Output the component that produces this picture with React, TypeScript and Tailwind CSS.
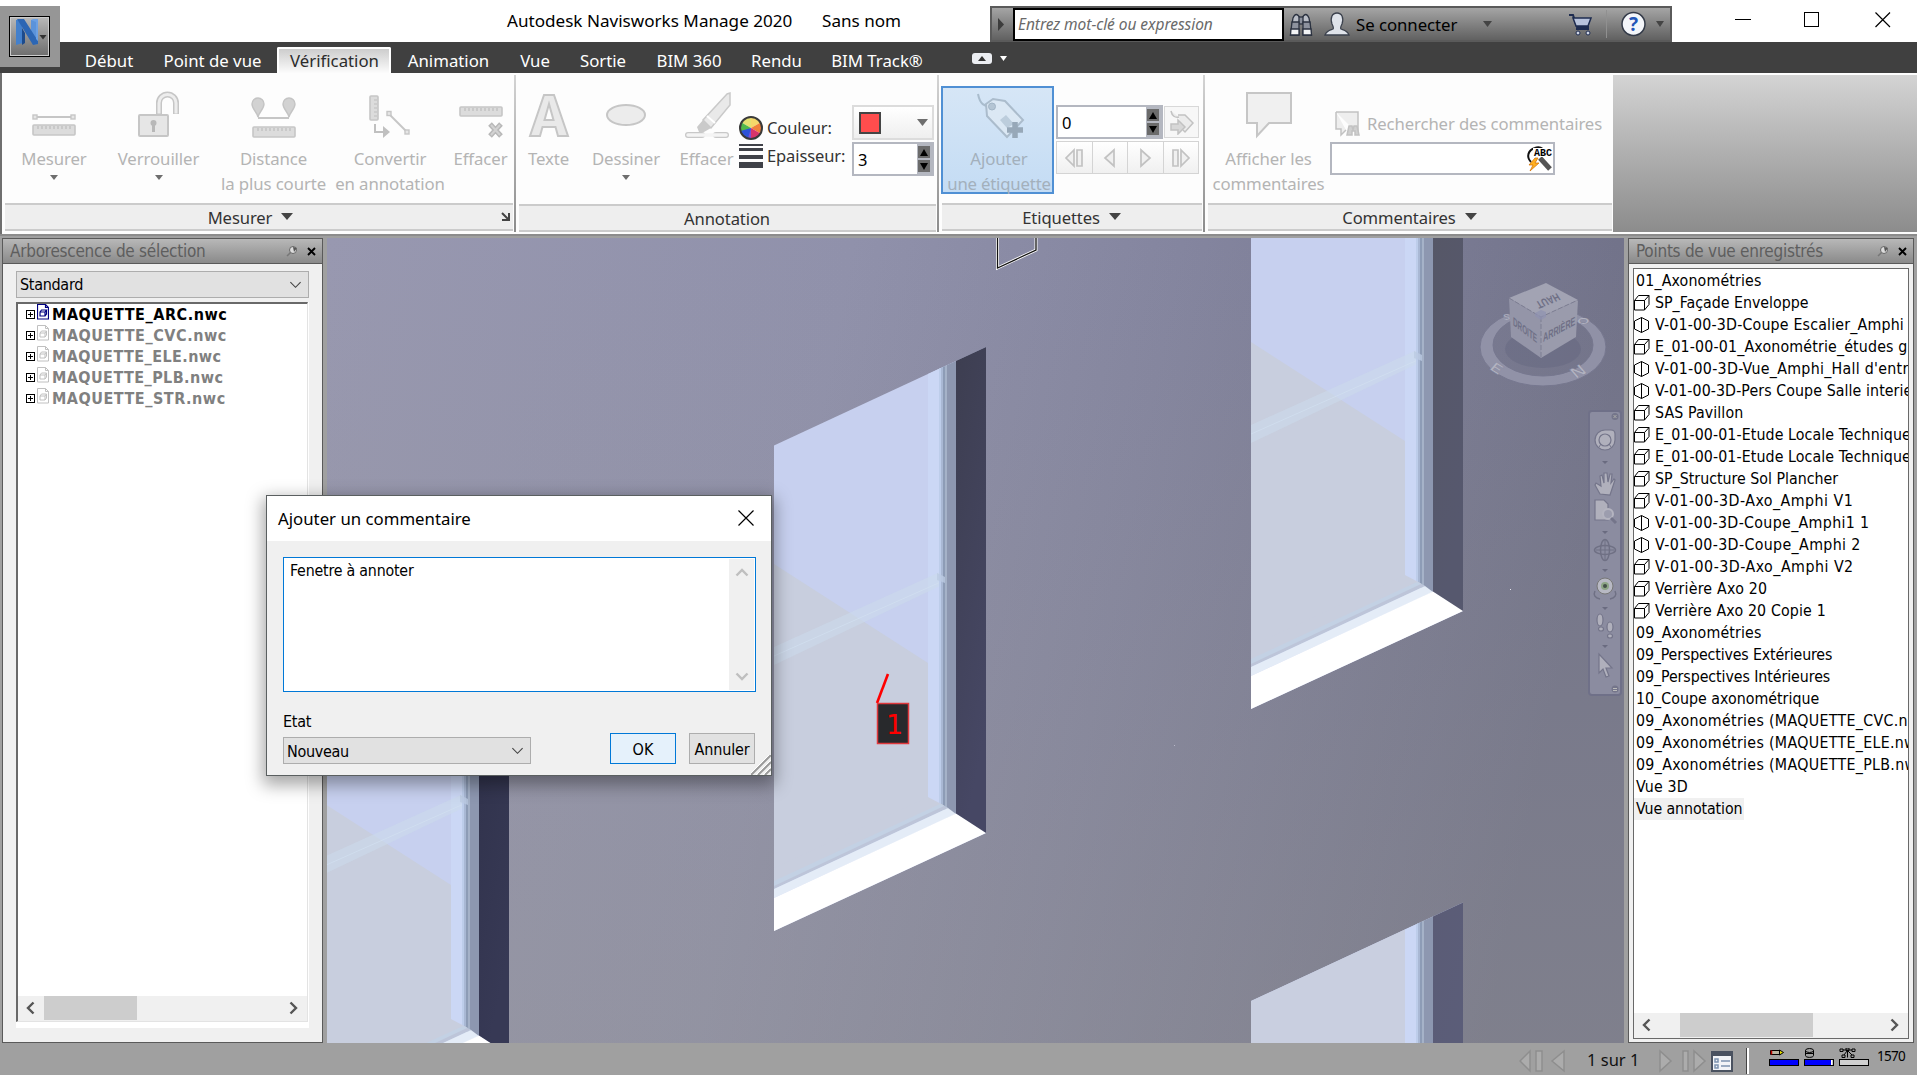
import React from "react";

const SEGOE = "font-['Noto_Sans','Segoe_UI',sans-serif]";
const TAHOMA = "font-['DejaVu_Sans_Condensed','Tahoma','DejaVu_Sans',sans-serif] [font-stretch:condensed]";

/* ---------- small shared pieces ---------- */

function Caret({ className = "", w = 9, h = 5, color = "#6e6e6e" }: { className?: string; w?: number; h?: number; color?: string }) {
  return (
    <svg width={w} height={h} viewBox="0 0 10 6" preserveAspectRatio="none" className={className}>
      <path d="M0 0h10L5 6z" fill={color} />
    </svg>
  );
}

function Chevron({ dir, color = "#555", size = 14, sw = 2.4 }: { dir: "left" | "right" | "up" | "down"; color?: string; size?: number; sw?: number }) {
  const d = { left: "M9.5 1.5L4 7l5.5 5.5", right: "M4.5 1.5L10 7l-5.5 5.5", up: "M1.5 9.5L7 4l5.5 5.5", down: "M1.5 4.5L7 10l5.5-5.5" }[dir];
  return (
    <svg width={size} height={size} viewBox="0 0 14 14" className="shrink-0">
      <path d={d} fill="none" stroke={color} strokeWidth={sw} />
    </svg>
  );
}

/* ---------- ribbon icons ---------- */

const G = { fill: "#e6e6e6", stroke: "#c6c6c6", strokeWidth: 2 };

function Ruler({ x, y, w = 43, h = 11 }: { x: number; y: number; w?: number; h?: number }) {
  const n = Math.floor((w - 6) / 4);
  return (
    <g>
      <rect x={x} y={y} width={w} height={h} rx="1" fill="#dcdcdc" stroke="#c6c6c6" strokeWidth="1.6" />
      {Array.from({ length: n }, (_, i) => (
        <path key={i} d={`M${x + 5 + i * 4} ${y + 1}v3`} stroke="#bdbdbd" strokeWidth="1.2" />
      ))}
    </g>
  );
}

const IconMesurer = () => (
  <svg width="50" height="50">
    <path d="M6 27h38" stroke="#c6c6c6" strokeWidth="2" />
    <rect x="4" y="25" width="4" height="4" {...G} strokeWidth="1.4" />
    <rect x="42" y="25" width="4" height="4" {...G} strokeWidth="1.4" />
    <Ruler x={4} y={35} w={42} h={10} />
  </svg>
);
const IconLock = () => (
  <svg width="50" height="50">
    <path d="M25 24V13a8.500 8.500 0 0 1 17 0v11" fill="none" stroke="#c6c6c6" strokeWidth="6" />
    <path d="M25 23.500V13a8.500 8.500 0 0 1 17 0v10.500" fill="none" stroke="#ededed" strokeWidth="3" />
    <rect x="5" y="25" width="29" height="21" rx="1" {...G} />
    <circle cx="19.500" cy="33" r="3" fill="#b8b8b8" />
    <path d="M19.500 33v9" stroke="#b8b8b8" strokeWidth="3" />
  </svg>
);
const Pin = ({ x }: { x: number }) => (
  <path d={`M${x} 27c-1-5-6-8-6-13a6 6 0 0 1 12 0c0 5-5 8-6 13z`} fill="#d2d2d2" stroke="#c4c4c4" strokeWidth="1.4" />
);
const IconDistance = () => (
  <svg width="50" height="50">
    <path d="M9 28h31" stroke="#c6c6c6" strokeWidth="2" />
    <Pin x={9} />
    <Pin x={40} />
    <Ruler x={4} y={37} w={42} h={10} />
  </svg>
);
const IconConvert = () => (
  <svg width="50" height="50">
    <rect x="5" y="6" width="8" height="24" rx="1" fill="#dcdcdc" stroke="#c6c6c6" strokeWidth="1.6" />
    <path d="M9 10h3M9 14h3M9 18h3M9 22h3M9 26h3" stroke="#bdbdbd" strokeWidth="1.200" />
    <path d="M10 34v8h9" fill="none" stroke="#c0c0c0" strokeWidth="2" />
    <path d="M18 36l7 6-7 6z" fill="#c0c0c0" />
    <path d="M24 24l18 18" stroke="#c6c6c6" strokeWidth="2" />
    <rect x="22" y="21.500" width="4" height="4" {...G} strokeWidth="1.4" />
    <rect x="40" y="40" width="4" height="4" {...G} strokeWidth="1.4" />
  </svg>
);
const IconErase = () => (
  <svg width="50" height="50">
    <Ruler x={4} y={17} w={42} h={9} />
    <path d="M34 34l11 12M45 34L34 46" stroke="#b8b8b8" strokeWidth="5" />
    <path d="M35 35l9 10M44 35l-9 10" stroke="#d2d2d2" strokeWidth="2" />
  </svg>
);
const IconText = () => (
  <svg width="50" height="50">
    <path d="M20 5h10l14 41H34l-2.500-9h-13L16 46H6zM25 14l-4.500 16h9z" fill="#e9e9e9" fillRule="evenodd" stroke="#c6c6c6" strokeWidth="2" />
  </svg>
);
const IconEllipse = () => (
  <svg width="50" height="50">
    <ellipse cx="25" cy="25" rx="19" ry="10" fill="#ececec" stroke="#c6c6c6" strokeWidth="2" />
  </svg>
);
const IconEraser = () => (
  <svg width="50" height="50">
    <path d="M6 45h14M34 45h10" stroke="#c8c8c8" strokeWidth="6" strokeLinecap="round" />
    <path d="M6 45h38" stroke="#f4f4f4" strokeWidth="3.500" strokeLinecap="round" />
    <path d="M45 4L21 30l8 8L48 15V3z" fill="#e9e9e9" stroke="#c9c9c9" strokeWidth="1.500" />
    <path d="M21 30l-6 7 2 5h5l7-4z" fill="#cacaca" />
    <path d="M25 26l8 7" stroke="#fff" strokeWidth="2" />
  </svg>
);
const IconTag = () => (
  <svg width="54" height="50">
    <path d="M6 3c2 10 6 13 14 12" fill="none" stroke="#a9bccd" strokeWidth="2" />
    <path d="M14 13l7-5 12 2 18 19-16 17L15 25z" fill="#dbe8f4" stroke="#abbccc" strokeWidth="2" />
    <circle cx="20" cy="15.500" r="3.500" fill="#b4c5d4" stroke="#a2b5c6" />
    <path d="M34 24l8 9-7 4-7-8z" fill="#bccddc" />
    <path d="M43 31v16M35 39h16" stroke="#97a8b8" strokeWidth="5.500" />
  </svg>
);
const IconBubble = () => (
  <svg width="50" height="50">
    <path d="M3 3h44v30H25L13 46V33H3z" fill="#f0f0f0" stroke="#c6c6c6" strokeWidth="2" />
  </svg>
);

/* ---------- ribbon building blocks ---------- */

function BigButton({ icon, lines, width, arrow }: { icon: React.ReactNode; lines: string[]; width: string; arrow?: boolean }) {
  return (
    <div className={`${width} flex shrink-0 flex-col items-center pt-[15px] text-[#b4b4b4]`}>
      <div className="h-[56px]">{icon}</div>
      {lines.map((l) => (
        <div key={l} className="text-[16.800px] leading-[25px] tracking-[-0.1px] whitespace-nowrap">
          {l}
        </div>
      ))}
      {arrow && <Caret className="mt-[4px]" w={8} h={5} />}
    </div>
  );
}

function Group({
  width,
  title,
  arrow,
  launcher,
  low,
  children,
}: {
  width: string;
  title: string;
  arrow?: boolean;
  launcher?: boolean;
  low?: boolean;
  children: React.ReactNode;
}) {
  return (
    <div className={`${width} flex shrink-0 flex-col`}>
      <div className={`${low ? "h-[129px]" : "h-[128px]"} flex`}>{children}</div>
      <div
        className={`${launcher ? "pr-[17px]" : "pr-[1px]"} relative mr-[1px] ml-[3px] flex h-[28px] items-center justify-center border-y-2 border-[#cbcbcb] bg-[#eeeeee] pt-[3px] text-[16.600px] text-[#333]`}
      >
        <span className="leading-none tracking-[-0.1px] whitespace-nowrap">{title}</span>
        {arrow && <Caret className="mb-[4px] ml-[9px]" w={12} h={7} color="#444" />}
        {launcher && (
          <svg width="9" height="9" className="absolute right-[3px] bottom-[8px]">
            <path d="M1 1l6 6M8 1v7H1" fill="none" stroke="#444" strokeWidth="2" />
          </svg>
        )}
      </div>
    </div>
  );
}

const Sep = () => <div className="h-[157px] w-[2px] shrink-0 bg-gradient-to-b from-[#d4d4d4] to-[#8c8c8c]" />;

function Spinner({ value, width }: { value: string; width: string }) {
  return (
    <div className={`${width} flex h-[34px] border-2 border-[#b4b7c0] bg-white`}>
      <div className="flex-1 pl-[4px] text-[16.500px] leading-[31px] text-black">{value}</div>
      <div className="flex w-[15px] flex-col justify-between bg-[#b4b7c0] py-[2px] pl-[1px]">
        <div className="flex h-[12px] w-[12px] items-center justify-center bg-[#6b6b6b]">
          <svg width="8" height="7">
            <path d="M0 7h8L4 0z" />
          </svg>
        </div>
        <div className="flex h-[12px] w-[12px] items-center justify-center bg-[#6b6b6b]">
          <svg width="8" height="7">
            <path d="M0 0h8L4 7z" />
          </svg>
        </div>
      </div>
    </div>
  );
}

function NavGlyph({ kind }: { kind: number }) {
  return (
    <svg width="20" height="20" fill="#f0f0f0" stroke="#c2c2c2" strokeWidth="1.700">
      {kind === 0 && <path d="M10 2v16L2 10zM13 2h5v16h-5z" />}
      {kind === 1 && <path d="M14 2v16L5 10z" />}
      {kind === 2 && <path d="M6 2v16l9-8z" />}
      {kind === 3 && <path d="M10 2v16l8-8zM2 2h5v16H2z" />}
    </svg>
  );
}

/* ---------- title bar ---------- */

const tabs: [string, string][] = [
  ["Début", "w-[78px]"],
  ["Point de vue", "w-[129px]"],
  ["Vérification", "w-[114px]"],
  ["Animation", "w-[115px]"],
  ["Vue", "w-[58px]"],
  ["Sortie", "w-[78px]"],
  ["BIM 360", "w-[94px]"],
  ["Rendu", "w-[81px]"],
  ["BIM Track®", "w-[120px]"],
];

function TitleBar() {
  return (
    <div className="flex h-[42px] bg-white">
      <div className="w-[507px] shrink-0" />
      <div className="w-[315px] shrink-0 pt-[8px] text-[17.100px] leading-[26px] whitespace-nowrap text-black">Autodesk Navisworks Manage 2020</div>
      <div className="w-[168px] shrink-0 pt-[8px] text-[17.100px] leading-[26px] whitespace-nowrap text-black">Sans nom</div>
      <div className="mt-[6px] flex h-[36px] w-[682px] shrink-0 items-center border-2 border-[#5a5a5a] bg-gradient-to-b from-[#a5a5a5] to-[#616161]">
        <svg width="21" height="30" className="shrink-0">
          <path d="M6 9l6 6.500L6 22z" fill="#3c3c3c" />
        </svg>
        <div className="h-[33px] w-[271px] shrink-0 border-2 border-black bg-white pl-[3px] text-[15.500px] leading-[29px] tracking-[-0.050px] whitespace-nowrap text-[#6a6a6a] italic">
          Entrez mot-clé ou expression
        </div>
        <svg width="24" height="26" className="ml-[5px] shrink-0" stroke="#2b3240" strokeWidth="1.300">
          <path d="M4 7q3-7 7 0l-1 5-7 1zM20 7q-3-7-7 0l1 5 7 1z" fill="#b9bdc6" />
          <rect x="10" y="6" width="4" height="7" fill="#8b909c" />
          <path d="M3 11h7v13H1.500zM14 11h7l1.500 13H14z" fill="#8d929e" />
          <path d="M2 18h8v6H1.500zM14 18h8l.5 6H14z" fill="#f2f3f5" />
        </svg>
        <svg width="26" height="26" className="ml-[11px] shrink-0" stroke="#3b414d" strokeWidth="1.300">
          <path d="M1 24c2-5 6-5 8-6 1-1 0-3-1-5-2-6 0-11 5-11s7 5 5 11c-1 2-2 4-1 5 2 1 6 1 8 6z" fill="#dfe3ea" />
        </svg>
        <span className="ml-[6px] w-[127px] pt-[3px] text-[16.800px] leading-none tracking-[-0.050px] whitespace-nowrap text-black">Se connecter</span>
        <Caret w={9} h={6} color="#444" />
        <svg width="26" height="26" className="ml-[75px] shrink-0">
          <path d="M2 4h4l4 12h12" fill="none" stroke="#1e2c50" strokeWidth="2" />
          <path d="M6 7h18l-3 8H9z" fill="#b8c3dc" stroke="#1e2c50" strokeWidth="1.500" />
          <path d="M9 18h13" stroke="#1e2c50" strokeWidth="2" />
          <circle cx="11" cy="22" r="2" fill="#d0d6e5" stroke="#1e2c50" />
          <circle cx="21" cy="22" r="2" fill="#d0d6e5" stroke="#1e2c50" />
        </svg>
        <div className="mr-[14px] ml-[13px] h-[28px] w-px bg-[#909090]" />
        <svg width="26" height="26" className="shrink-0">
          <circle cx="12.500" cy="13" r="11.500" fill="#f4f6fa" stroke="#333a48" strokeWidth="1.500" />
          <text x="12.500" y="20" textAnchor="middle" fontSize="19" fontWeight="bold" fill="#2456b8" fontFamily="Noto Sans, sans-serif">
            ?
          </text>
        </svg>
        <Caret className="ml-[9px]" w={8} h={6} color="#444" />
      </div>
      <svg width="245" height="42" className="shrink-0" fill="none" stroke="#000" strokeWidth="1.200" shapeRendering="crispEdges">
        <path d="M63 19.500h16" />
        <rect x="132.500" y="12.500" width="14" height="14" />
        <path d="M203.500 12.500l14.500 14.500M218 12.500L203.500 27" shapeRendering="auto" />
      </svg>
    </div>
  );
}

function TabBar() {
  return (
    <div className="flex h-[31px] items-end bg-[#404040] pl-[70px]">
      {tabs.map(([t, w], i) => (
        <div
          key={t}
          className={`${w} h-[26px] shrink-0 text-center text-[16.800px] whitespace-nowrap ${
            i === 2 ? "rounded-t-[2px] border-x-2 border-t-2 border-white bg-gradient-to-b from-[#cdcdcd] to-[#fcfcfc] pl-px leading-[23px] text-[#2c2c2c]" : "leading-[27px] text-white"
          }`}
        >
          {t}
        </div>
      ))}
      <div className="mb-[9px] ml-[35px] flex h-[11px] w-[20px] items-center justify-center rounded-[3px] bg-[#eceef2]">
        <svg width="8" height="5">
          <path d="M0 5h8L4 0z" fill="#333" />
        </svg>
      </div>
      <Caret className="mb-[12px] ml-[8px]" w={7} h={5} color="#fff" />
    </div>
  );
}

function AppButton() {
  return (
    <div className="absolute top-[6px] left-0 flex h-[61px] w-[60px] bg-[#969696] pt-[10px] pl-[9px]">
      <div className="flex h-[41px] w-[41px] items-start border border-black bg-gradient-to-b from-[#b9b9b9] to-[#6e6e6e] pt-[2px] pl-[4px] outline-1 -outline-offset-2 outline-[#ccc]">
        <svg width="34" height="30">
          <path d="M2 1l6-1 1 24-7 2z" fill="#4380cc" />
          <path d="M8 9l3 5v10l-3 2z" fill="#1d4b8c" />
          <path d="M17 1h7v22l-2 3-5-8z" fill="#5b93da" />
          <path d="M3 0h7l14 22v3l-5 1L8 8z" fill="#2c66b4" />
          <path d="M17 1l2-1h5v22l-2-2V3z" fill="#6ba0e4" />
          <path d="M25.500 16h7L29 20.500z" fill="#333" />
        </svg>
      </div>
    </div>
  );
}

/* ---------- ribbon ---------- */

function Ribbon() {
  return (
    <div className="h-[165px] bg-[#a0a0a0]">
      <div className="flex h-[161px] border-b-0 border-l-2 border-l-[#6f6f6f] bg-[#fdfdfd] pt-[2px]">
        <Group width="w-[512px]" title="Mesurer" arrow launcher>
          <BigButton icon={<IconMesurer />} lines={["Mesurer"]} width="w-[104px]" arrow />
          <BigButton icon={<IconLock />} lines={["Verrouiller"]} width="w-[105px]" arrow />
          <BigButton icon={<IconDistance />} lines={["Distance", "la plus courte"]} width="w-[125px]" />
          <BigButton icon={<IconConvert />} lines={["Convertir", "en annotation"]} width="w-[108px]" />
          <BigButton icon={<IconErase />} lines={["Effacer"]} width="w-[73px]" />
        </Group>
        <Sep />
        <Group width="w-[421px]" title="Annotation" low>
          <BigButton icon={<IconText />} lines={["Texte"]} width="w-[65px]" />
          <BigButton icon={<IconEllipse />} lines={["Dessiner"]} width="w-[90px]" arrow />
          <BigButton icon={<IconEraser />} lines={["Effacer"]} width="w-[71px]" />
          <div className="-ml-px flex w-[111px] shrink-0 flex-col pt-[39px]">
            <div className="flex h-[28px] items-center">
              <svg width="26" height="26" viewBox="-13 -13 26 26" className="-ml-[3px] shrink-0">
                <path d="M0 0L0-11A11 11 0 0 1 9.500-5.500z" fill="#f5d76a" />
                <path d="M0 0L-9.500-5.500A11 11 0 0 1 0-11z" fill="#e6e070" />
                <path d="M0 0L9.500-5.500A11 11 0 0 1 9.500 5.500z" fill="#f0803a" />
                <path d="M0 0L9.500 5.500A11 11 0 0 1 0 11z" fill="#d8356a" />
                <path d="M0 0L0 11A11 11 0 0 1-9.500 5.500z" fill="#7a50d8" />
                <path d="M0 0L-9.500 5.500A11 11 0 0 1-9.500-5.500z" fill="#52b84a" />
                <path d="M0 0L-10.500 3A11 11 0 0 0-3 10.500z" fill="#2d52d8" />
                <circle r="11" fill="none" stroke="#3a3a3a" strokeWidth="2" />
              </svg>
              <span className="ml-[3px] text-[16.500px] tracking-[-0.1px] text-[#333]">Couleur:</span>
            </div>
            <div className="flex h-[28px] items-center">
              <svg width="24" height="24" className="-ml-[2px] shrink-0" fill="#3f4148">
                <path d="M0 0h24v2H0zM0 4h24v3H0zM0 11h24v4H0zM0 18h24v6H0z" />
              </svg>
              <span className="ml-[4px] text-[16.500px] tracking-[-0.1px] text-[#333]">Epaisseur:</span>
            </div>
          </div>
          <div className="flex shrink-0 flex-col gap-[2px] pt-[30px]">
            <div className="flex h-[35px] w-[82px] items-center justify-between border-2 border-[#dcdcdc] bg-gradient-to-b from-white to-[#efefef] pr-[4px] pl-[5px]">
              <div className="h-[22px] w-[22px] border-2 border-[#444] bg-[#ff4d4d]" />
              <Caret w={11} h={7} />
            </div>
            <Spinner value="3" width="w-[82px]" />
          </div>
        </Group>
        <Sep />
        <Group width="w-[264px]" title="Etiquettes" arrow>
          <div className="mt-[11px] ml-[2px] flex h-[108px] w-[113px] shrink-0 flex-col items-center border-2 border-[#5090d4] bg-gradient-to-b from-[#d6e6f6] to-[#c4dcf4] pt-[3px] pl-[3px] text-[#a3b0bc]">
            <div className="h-[55px] shrink-0">
              <IconTag />
            </div>
            <div className="h-[25px] shrink-0 text-[16.800px] leading-[25px] tracking-[-0.1px]">Ajouter</div>
            <div className="h-[21px] shrink-0 text-[16.800px] leading-[25px] tracking-[-0.2px] whitespace-nowrap">une étiquette</div>
          </div>
          <div className="ml-[2px] pt-[30px]">
            <div className="flex gap-px">
              <Spinner value="0" width="w-[107px]" />
              <div className="mt-px flex h-[32px] w-[35px] items-center justify-center border border-[#d8d8d8] bg-[#f7f7f7]">
                <svg width="26" height="26" fill="#ececec" stroke="#c2c2c2" strokeWidth="1.500">
                  <path d="M2 2c1 5 4 7 8 6M9 6h7l8 8-8 9-2-2" />
                  <path d="M2 15h7v-4l7 7-7 7v-4H2z" fill="#d8d8d8" />
                </svg>
              </div>
            </div>
            <div className="mt-[2px] flex h-[33px] w-[143px] border border-[#d4d4d4] bg-gradient-to-b from-white to-[#f0f0f0]">
              {[0, 1, 2, 3].map((k) => (
                <div key={k} className="flex flex-1 items-center justify-center border-r border-[#d4d4d4] last:border-r-0">
                  <NavGlyph kind={k} />
                </div>
              ))}
            </div>
          </div>
        </Group>
        <Sep />
        <Group width="w-[408px]" title="Commentaires" arrow>
          <BigButton icon={<IconBubble />} lines={["Afficher les", "commentaires"]} width="w-[127px]" />
          <div className="-ml-[2px] pt-[33px]">
            <div className="flex h-[32px] items-center">
              <svg width="26" height="26" className="ml-[5px] shrink-0" fill="#eee" stroke="#c2c2c2" strokeWidth="1.500">
                <path d="M1 1h22v22M1 1v17h5v6l5-5" />
                <path d="M12 24l2-9h3l1 4 1-4h3l2 9h-4v-4h-3v4z" fill="#d0d0d0" />
              </svg>
              <span className="ml-[6px] text-[16.700px] tracking-[-0.1px] whitespace-nowrap text-[#b4b4b4]">Rechercher des commentaires</span>
            </div>
            <div className="mt-[2px] flex h-[33px] w-[225px] items-center justify-end border-2 border-[#b4b7c0] bg-white">
              <svg width="27" height="27">
                <path d="M9 3C2 5 0 12 5 17M9 3c4-2 8 0 9 3" fill="none" stroke="#111" strokeWidth="2" />
                <path d="M14 13l10 11" stroke="#555" strokeWidth="5" />
                <path d="M9 13l-6 7h4l-3 6 9-8H9l3-5z" fill="#ffb020" stroke="#d06a00" strokeWidth=".7" />
                <rect x="7" y="3" width="20" height="9" fill="#fff" />
                <text x="8" y="11" fontSize="10" fontWeight="bold" fontFamily="Liberation Mono, monospace" textLength="18">
                  ABC
                </text>
              </svg>
            </div>
          </div>
        </Group>
        <div className="h-[157px] flex-1 bg-gradient-to-b from-[#d4d4d4] to-[#8c8c8c]" />
      </div>
      <div className="h-[2px] bg-[#8c8c8c]" />
    </div>
  );
}

/* ---------- side panels ---------- */

function PanelHeader({ title }: { title: string }) {
  return (
    <div className="flex h-[25px] items-center border-b border-[#5a5a5a] bg-gradient-to-b from-[#b8b8b8] to-[#8a8a8a] pl-[7px] text-[17px] text-[#5e5e5e]">
      <span className="flex-1 leading-none tracking-[-0.260px] whitespace-nowrap">{title}</span>
      <svg width="12" height="12" className="mr-[9px]">
        <path d="M1 11l4-4" stroke="#777" strokeWidth="1.500" />
        <circle cx="7" cy="5" r="3.500" fill="#ddd" stroke="#666" />
        <path d="M7 2l4 1-3 4z" fill="#555" />
      </svg>
      <svg width="9" height="9" className="mr-[6px]">
        <path d="M1 1l7 7M8 1L1 8" stroke="#000" strokeWidth="1.900" />
      </svg>
    </div>
  );
}

/* name, loaded, tracking */
const models: [string, boolean, string][] = [
  ["MAQUETTE_ARC.nwc", true, "tracking-[0.550px]"],
  ["MAQUETTE_CVC.nwc", false, "tracking-[0.550px]"],
  ["MAQUETTE_ELE.nwc", false, "tracking-[0.430px]"],
  ["MAQUETTE_PLB.nwc", false, "tracking-[0.430px]"],
  ["MAQUETTE_STR.nwc", false, "tracking-[0.520px]"],
];

function SelectionTree() {
  return (
    <div className={`${TAHOMA} ml-[2px] flex h-[805px] w-[321px] shrink-0 flex-col border border-[#5a5a5a] bg-[#f0f0f0]`}>
      <PanelHeader title="Arborescence de sélection" />
      <div className="mx-[13px] mt-[7px] flex h-[27px] w-[293px] items-center justify-between border border-[#adadad] bg-[#e1e1e1] pr-[6px] pl-[3px] text-[16px]">
        <span className="pt-px tracking-[-0.3px]">Standard</span>
        <Chevron dir="down" color="#444" size={13} sw={1.2} />
      </div>
      <div className="mx-[13px] mt-[4px] h-[726px] w-[293px] bg-white">
        <div className="flex h-[720px] w-[292px] flex-col border-t-2 border-r border-b border-l-2 border-t-[#696969] border-r-[#e3e3e3] border-b-[#e3e3e3] border-l-[#696969]">
          <div className="flex-1">
            {models.map(([name, on, tracking]) => (
              <div key={name} className={`flex h-[21px] items-center pl-[8px] ${on ? "text-black" : "text-[#808080]"}`}>
                <svg width="9" height="9" className="shrink-0" fill="none" stroke="#000" shapeRendering="crispEdges">
                  <rect x=".5" y=".5" width="8" height="8" />
                  <path d="M2 4.500h5M4.500 2v5" />
                </svg>
                <svg width="12" height="16" className="mb-[5px] ml-[2px] shrink-0" fill="none" stroke={on ? "#000080" : "#c0c0c0"} strokeWidth={on ? 1.2 : 1}>
                  <path d="M.5 .5h8l3 3v11.500H.5zM8.500 .5v3h3" />
                  <path d="M3 8h5v4H3zM3 8l1.500-2h5L8 8M9.500 6v4L8 12" />
                </svg>
                <span className={`ml-[3px] text-[16px] leading-none font-bold whitespace-nowrap ${tracking}`}>{name}</span>
              </div>
            ))}
          </div>
          <div className="flex h-[25px] items-center bg-[#f0f0f0] pb-px">
            <span className="w-[26px] pl-[6px]">
              <Chevron dir="left" />
            </span>
            <div className="h-[24px] w-[93px] bg-[#cdcdcd]" />
            <span className="ml-auto pr-[7px]">
              <Chevron dir="right" />
            </span>
          </div>
        </div>
      </div>
    </div>
  );
}

/* name, icon kind (folder / box / perspective), tracking */
const views: [string, "f" | "b" | "p", string][] = [
  ["01_Axonométries", "f", "tracking-[0.150px]"],
  ["SP_Façade Enveloppe", "b", "tracking-[0px]"],
  ["V-01-00-3D-Coupe Escalier_Amphi", "p", "tracking-[0.180px]"],
  ["E_01-00-01_Axonométrie_études g", "b", "tracking-[0.160px]"],
  ["V-01-00-3D-Vue_Amphi_Hall d'entr", "p", "tracking-[0.280px]"],
  ["V-01-00-3D-Pers Coupe Salle interie", "p", "tracking-[0.080px]"],
  ["SAS Pavillon", "b", "tracking-[0.100px]"],
  ["E_01-00-01-Etude Locale Technique", "b", "tracking-[0.090px]"],
  ["E_01-00-01-Etude Locale Technique", "b", "tracking-[0.090px]"],
  ["SP_Structure Sol Plancher", "b", "tracking-[0px]"],
  ["V-01-00-3D-Axo_Amphi V1", "b", "tracking-[0.470px]"],
  ["V-01-00-3D-Coupe_Amphi1 1", "p", "tracking-[0.330px]"],
  ["V-01-00-3D-Coupe_Amphi 2", "p", "tracking-[0.360px]"],
  ["V-01-00-3D-Axo_Amphi V2", "b", "tracking-[0.490px]"],
  ["Verrière Axo 20", "b", "tracking-[0.220px]"],
  ["Verrière Axo 20 Copie 1", "b", "tracking-[0.150px]"],
  ["09_Axonométries", "f", "tracking-[0.150px]"],
  ["09_Perspectives Extérieures", "f", "tracking-[-0.150px]"],
  ["09_Perspectives Intérieures", "f", "tracking-[-0.070px]"],
  ["10_Coupe axonométrique", "f", "tracking-[0.020px]"],
  ["09_Axonométries (MAQUETTE_CVC.nwc)", "f", "tracking-[0.320px]"],
  ["09_Axonométries (MAQUETTE_ELE.nwc)", "f", "tracking-[0.320px]"],
  ["09_Axonométries (MAQUETTE_PLB.nwc)", "f", "tracking-[0.320px]"],
  ["Vue 3D", "f", "tracking-[0.150px]"],
  ["Vue annotation", "f", "tracking-[-0.100px]"],
];

function SavedViews() {
  return (
    <div className={`${TAHOMA} ml-[4px] flex h-[805px] w-[286px] shrink-0 flex-col border border-[#5a5a5a] bg-[#f0f0f0]`}>
      <PanelHeader title="Points de vue enregistrés" />
      <div className="mt-[4px] ml-[4px] flex h-[771px] w-[276px] flex-col border border-[#696969] bg-white">
        <div className="flex-1 overflow-hidden pt-px">
          {views.map(([name, kind, tracking], i) => (
            <div key={i} className="flex h-[22px] items-center">
              {kind !== "f" && (
                <svg width="16" height="16" className="mr-[5px] shrink-0" fill="none" stroke="#000" strokeWidth="1">
                  {kind === "b" ? (
                    <path d="M.5 5.500h10v9.500H.5zM.5 5.500l4-5h10.500l-4.500 5M15 .5v9l-4.500 5.500" />
                  ) : (
                    <path d="M7.500 .5v15M7.500 .5L.5 4v8l7 3.500 7-3.500V4z" />
                  )}
                </svg>
              )}
              <span className={`text-[15.800px] leading-[22px] whitespace-nowrap ${tracking} ${kind === "f" ? "pl-[2px]" : ""} ${i === 24 ? "bg-[#f0f0f0] pr-[2px]" : ""}`}>{name}</span>
            </div>
          ))}
        </div>
        <div className="flex h-[25px] items-center bg-[#f0f0f0] pb-px">
          <span className="w-[46px] pl-[6px]">
            <Chevron dir="left" />
          </span>
          <div className="h-[24px] w-[133px] bg-[#cdcdcd]" />
          <span className="ml-auto pr-[7px]">
            <Chevron dir="right" />
          </span>
        </div>
      </div>
    </div>
  );
}

/* ---------- 3D scene ---------- */

function FacadeWindow({ dx, dy, dark, full, id }: { dx: number; dy: number; dark: [string, string]; full?: boolean; id: string }) {
  return (
    <g transform={`translate(${dx} ${dy})`}>
      <defs>
        <linearGradient id={id} x1="0" y1="0" x2="0.3" y2="1">
          <stop offset="0" stopColor={dark[0]} />
          <stop offset="1" stopColor={dark[1]} />
        </linearGradient>
        <clipPath id={id + "c"}>
          <path d="M774 445.500L986 347V833L774 931z" />
        </clipPath>
      </defs>
      <g clipPath={`url(#${id}c)`}>
        <rect x="774" y="340" width="212" height="600" fill="#c7d0ef" />
        {full ? <rect x="774" y="340" width="154" height="600" fill="#c9cfe0" /> : <path d="M774 564L928 663V797L941 804 774 883z" fill="#c8cede" />}
        <rect x="928" y="340" width="13" height="470" fill="#cbd7f5" />
        <path d="M774 647L940 572V586L774 665z" fill="#cbdaeb" opacity={full ? 0 : 0.6} />
        <path d="M774 656L943 581" stroke="#d3e1f1" strokeWidth="1" opacity={full ? 0 : 0.7} />
        <rect x="939" y="340" width="2" height="470" fill="#bdcdea" />
        <rect x="941" y="340" width="2" height="470" fill="#a9b8d4" />
        <rect x="943" y="340" width="2" height="470" fill="#8d9cb6" />
        <rect x="945" y="340" width="2" height="470" fill="#a5b2c8" />
        <rect x="947" y="340" width="9" height="480" fill="#8d97b0" />
        {!full && <path d="M937 573l8 4v6l-8-3z" fill="#bccbe2" opacity=".8" />}
        {!full && <path d="M928 797L945 806 774 884V868z" fill="#c8cede" />}
        <path d="M774 881L940 804 948 808 774 889z" fill="#c3d1e4" />
        <path d="M774 886L944 806 948 808 774 889z" fill="#bdc5d9" />
        <path d="M774 889L948 808 956 814 774 898z" fill="#e4ecf7" />
        <path d="M774 898L956 813.500 990 834 774 935z" fill="#fff" />
        <path d="M956 340h30v493l-30-19.500z" fill={`url(#${id})`} />
      </g>
    </g>
  );
}

function ViewCube() {
  return (
    <g>
      <path
        d="M1480 347a63 39 0 1 0 126 0a63 39 0 1 0-126 0zM1493 345a50 31 0 1 1 100 0a50 31 0 1 1-100 0z"
        fill="#9a9bb0"
        fillRule="evenodd"
        stroke="#777890"
        opacity=".75"
      />
      <ellipse cx="1543" cy="349" rx="38" ry="19" fill="#5f607a" opacity=".35" />
      <path d="M1509 298L1546 283 1578 300 1541 317z" fill="#a2a3b3" />
      <path d="M1509 298L1541 317V358L1511 337z" fill="#9495a8" />
      <path d="M1541 317L1578 300 1576 337 1541 358z" fill="#9a9bac" />
      <path d="M1509 298L1541 317 1578 300M1541 317V358" fill="none" stroke="#7d7e92" strokeDasharray="5 2" />
      <path d="M1535 313l6-3 5 2v5l-5 3-6-4z" fill="#8f92b0" opacity=".7" />
      <g fontFamily="Liberation Sans Narrow, Liberation Sans, sans-serif" fontWeight="bold" fill="#6f7086" fontSize="12">
        <text transform="matrix(.53 .4 0 1 1513 325)">DROITE</text>
        <text transform="matrix(.6 -.32 0 1 1543 342)">ARRIÈRE</text>
        <text transform="matrix(-.66 .28 -.5 -.8 1557 293)">HAUT</text>
      </g>
      <g fontFamily="Liberation Sans, sans-serif" fontWeight="bold" fill="#b2b3c1" stroke="#82839a" strokeWidth=".5" fontSize="18">
        <text transform="matrix(.8 .5 -.5 .6 1489 369)">E</text>
        <text transform="matrix(.9 -.5 .6 .7 1576 379)">N</text>
        <text transform="matrix(.9 0 0 .5 1577 324)">O</text>
        <text transform="matrix(.6 0 0 .5 1503 320)">S</text>
      </g>
    </g>
  );
}

function NavBar() {
  const f = { fill: "#b0b0bc", stroke: "#74758a", strokeWidth: 1.2 };
  return (
    <div className="absolute top-[172px] right-[2px] h-[286px] w-[34px] rounded-[4px] border-2 border-[#6f7088] bg-[#8b8ca0]">
      <svg width="30" height="282" fill="none">
        <circle cx="25" cy="4.500" r="3.500" fill="#74758a" />
        <path d="M23.500 3l3 3M26.500 3l-3 3" stroke="#aaa" />
        <path d="M15 18h6q4 0 4 4v6a10 10 0 1 1-10-10z" {...f} />
        <circle cx="15" cy="28" r="6" {...f} />
        <path d="M11 32l-2 3M19 32l2 3" stroke="#74758a" />
        <path d="M10 82l-5-9 1-2 5 3-1-10 2-1 2 8V61h3l1 9 2-8h2l-1 9 3-4 1 1-3 9-2 6z" {...f} />
        <path d="M5 88h9l4 4v16H5z" {...f} />
        <circle cx="18" cy="102" r="5" fill="#9c9dae" stroke="#b4b4c0" strokeWidth="2" />
        <path d="M21 106l5 5" stroke="#74758a" strokeWidth="3" />
        <path d="M15 127v21M6 138h18" stroke="#6f7084" />
        <ellipse cx="15" cy="138" rx="4.500" ry="10.500" stroke="#6f7084" strokeWidth="1.500" />
        <ellipse cx="15" cy="138" rx="10.500" ry="4.500" stroke="#6f7084" strokeWidth="1.500" />
        <circle cx="15" cy="174" r="8" fill="#b8b9c4" stroke="#777" />
        <circle cx="15" cy="174" r="4" fill="#8da586" />
        <circle cx="15" cy="174" r="2" fill="#44504a" />
        <path d="M5 179c-2 4 0 7 5 8M25 179c2 4 0 7-5 8" stroke="#6f7084" strokeWidth="1.500" />
        <ellipse cx="10" cy="208" rx="3" ry="6" {...f} />
        <ellipse cx="11" cy="217" rx="2.500" ry="2" {...f} />
        <ellipse cx="20" cy="215" rx="3" ry="5" {...f} />
        <ellipse cx="20" cy="224" rx="2.500" ry="2" {...f} />
        <path d="M9 242v19l4-4 3 8 3-1-3-8h6z" {...f} />
        {[49, 119, 157, 195, 233].map((y) => (
          <path key={y} d={`M12 ${y}h6l-3 3z`} fill="#6a6b80" />
        ))}
        <circle cx="25" cy="277" r="3.500" fill="#74758a" />
        <path d="M23 276.500h4M23 278.500h4" stroke="#bbb" />
      </svg>
    </div>
  );
}

function Scene() {
  return (
    <div className="relative ml-[4px] h-[805px] w-[1297px] shrink-0">
      <svg width="1297" height="805" viewBox="327 238 1297 805" className="block">
        <defs>
          <linearGradient id="wall" x1="0" y1="0" x2="1" y2="0.12">
            <stop offset="0" stopColor="#9898b0" />
            <stop offset=".4" stopColor="#9091ab" />
            <stop offset=".65" stopColor="#84859f" />
            <stop offset="1" stopColor="#717289" />
          </linearGradient>
          <linearGradient id="warm" x1="0" y1="0" x2="0" y2="1">
            <stop offset="0" stopColor="#969692" stopOpacity="0" />
            <stop offset="1" stopColor="#969692" stopOpacity=".38" />
          </linearGradient>
        </defs>
        <rect x="327" y="238" width="1297" height="805" fill="url(#wall)" />
        <rect x="327" y="238" width="1297" height="805" fill="url(#warm)" />
        <FacadeWindow id="wa" dx={0} dy={0} dark={["#3d3e50", "#464764"]} />
        <FacadeWindow id="wb" dx={477} dy={-222} dark={["#565765", "#56586e"]} />
        <FacadeWindow id="wc" dx={-477} dy={222} dark={["#2e3048", "#373955"]} />
        <FacadeWindow id="wd" dx={477} dy={555.5} dark={["#5b5c76", "#5b5e7b"]} full />
        <path d="M997.500 238V268L1036 250V238" fill="none" stroke="#fff" strokeWidth="3" />
        <path d="M997.500 238V268L1036 250V238" fill="none" stroke="#111" strokeWidth="1.300" />
        <rect x="1510" y="589" width="1" height="1" fill="#e8e8f0" />
        <rect x="1174" y="745" width="1" height="1" fill="#b8b8c8" />
        <ViewCube />
        <path d="M888 674L877 703" stroke="#f00" strokeWidth="2.600" />
        <rect x="877.500" y="703.500" width="31" height="40" fill="#28292c" stroke="#e0383c" strokeWidth="1.500" />
        <text x="894.500" y="734" textAnchor="middle" fontSize="27" fill="#f00" fontFamily="DejaVu Sans, sans-serif">
          1
        </text>
      </svg>
      <NavBar />
    </div>
  );
}

/* ---------- dialog ---------- */

function CommentDialog() {
  return (
    <div className={`${TAHOMA} absolute top-[495px] left-[266px] flex h-[281px] w-[506px] flex-col border border-[#5a5f60] bg-[#f0f0f0] text-[16px] text-black shadow-[0_6px_16px_3px_rgba(0,0,0,0.35)]`}>
      <div className={`${SEGOE} flex h-[45px] items-center justify-between bg-white pr-[17px] pl-[11px] text-[16.800px]`}>
        <span>Ajouter un commentaire</span>
        <svg width="16" height="16" className="mb-[2px]">
          <path d="M.5 .5l15 15M15.500 .5l-15 15" stroke="#000" strokeWidth="1.200" />
        </svg>
      </div>
      <div className="mt-[16px] ml-[16px] flex h-[135px] w-[473px] justify-between border border-[#0078d7] bg-white p-px">
        <div className="pt-[2px] pl-[5px] text-[15.800px] leading-[20px] tracking-[-0.2px]">Fenetre à annoter</div>
        <div className="flex w-[25px] flex-col items-center justify-between bg-[#f0f0f0] py-[7px]">
          <Chevron dir="up" color="#bfbfbf" />
          <Chevron dir="down" color="#bfbfbf" />
        </div>
      </div>
      <div className="flex pl-[16px]">
        <div className="w-[327px] pt-[19px]">
          <div className="h-[26px] leading-[22px] tracking-[-0.3px]">Etat</div>
          <div className="flex h-[27px] w-[248px] items-center justify-between border border-[#adadad] bg-[#e1e1e1] pr-[6px] pl-[3px]">
            <span className="pt-[2px] tracking-[-0.3px]">Nouveau</span>
            <Chevron dir="down" color="#444" size={13} sw={1.2} />
          </div>
        </div>
        <div className="mt-[41px] flex h-[31px] w-[66px] items-center justify-center border border-[#0078d7] bg-[#e5f1fb] pt-[2px]">OK</div>
        <div className="mt-[41px] ml-[13px] flex h-[31px] w-[66px] items-center justify-center border border-[#adadad] bg-[#e1e1e1] pt-[2px] tracking-[-0.150px]">Annuler</div>
      </div>
      <svg width="20" height="20" className="absolute right-0 bottom-0">
        <path d="M0 20L20 0M7 20L20 7M14 20l6-6" stroke="#9a9a9a" strokeWidth="2" />
        <path d="M-2 20L20-2M5 20L20 5M12 20l8-8" stroke="#fff" strokeWidth="1" />
      </svg>
    </div>
  );
}

/* ---------- status bar ---------- */

function Meter({ fill, children }: { fill: string; children: React.ReactNode }) {
  return (
    <div className="mr-[5px] w-[30px] pt-[5px]">
      <svg width="18" height="10" className="mb-px" fill="none" stroke="#000">
        {children}
      </svg>
      <div className="h-[7px] border border-black bg-[#d0d0d0]">
        <div className={`${fill} h-full bg-[#0000ff]`} />
      </div>
    </div>
  );
}

function StatusBar() {
  const a = { fill: "#acacac", stroke: "#8e8e8e", strokeWidth: 1.5 };
  return (
    <div className="flex h-[32px] bg-[#a0a0a0] pl-[1519px]">
      <svg width="68" height="32" className="shrink-0" {...a}>
        <path d="M11 8v20L1 18zM17 8h6v20h-6zM45 8v20L33 18z" />
      </svg>
      <div className="w-[67px] shrink-0 pt-[1px] text-[16.500px] leading-[31px] whitespace-nowrap text-[#111]">1 sur 1</div>
      <svg width="92" height="32" className="shrink-0">
        <g {...a}>
          <path d="M6 8v20l11-10zM29 8h5v20h-5zM40 8v20l11-10z" />
        </g>
        <rect x="58" y="9" width="20" height="19" fill="#f2f4f7" stroke="#4a5260" strokeWidth="2" />
        <path d="M58 11h20" stroke="#4a5260" strokeWidth="4" />
        <path d="M61 16h3v3h-3zM61 22h3v3h-3zM67 18h9M67 23h9" fill="none" stroke="#7d93b0" strokeWidth="1.500" />
      </svg>
      <div className="mt-[5px] h-[26px] w-[3px] shrink-0 border-r-2 border-l border-r-white border-l-[#444]" />
      <div className="w-[20px] shrink-0" />
      <Meter fill="w-full">
        <path d="M1.500 2.500h9v4h-9z" fill="#b8b4a0" />
        <path d="M10.500 2l4 2.500-4 2.500z" fill="#e8e000" />
        <path d="M2.500 2.500v4" stroke="#b00" strokeWidth="1.5" />
      </Meter>
      <Meter fill="w-[27px] border-r border-white">
        <ellipse cx="5.500" cy="2.500" rx="4" ry="2" />
        <path d="M1.500 2.500v5c0 2.500 8 2.500 8 0v-5M1.500 5.500h8" />
      </Meter>
      <Meter fill="w-0">
        <path d="M1 1h3v2.500H1zM7 0h3v2.500H7zM13 1h3v2.500h-3zM3 7h3v2.500H3zM12 7h3v2.500h-3zM4 2h9M8.500 2.500v7M8 3L5 7M9 3l4 4" />
      </Meter>
      <div className="ml-[3px] pt-[3px] text-[13.500px] leading-[21px] tracking-[-0.700px] text-black">1570</div>
    </div>
  );
}

export default function App() {
  return (
    <div className={`${SEGOE} relative flex h-[1075px] w-[1917px] flex-col overflow-hidden bg-[#a0a0a0]`}>
      <TitleBar />
      <TabBar />
      <Ribbon />
      <div className="flex h-[805px]">
        <SelectionTree />
        <Scene />
        <SavedViews />
      </div>
      <StatusBar />
      <AppButton />
      <CommentDialog />
    </div>
  );
}
